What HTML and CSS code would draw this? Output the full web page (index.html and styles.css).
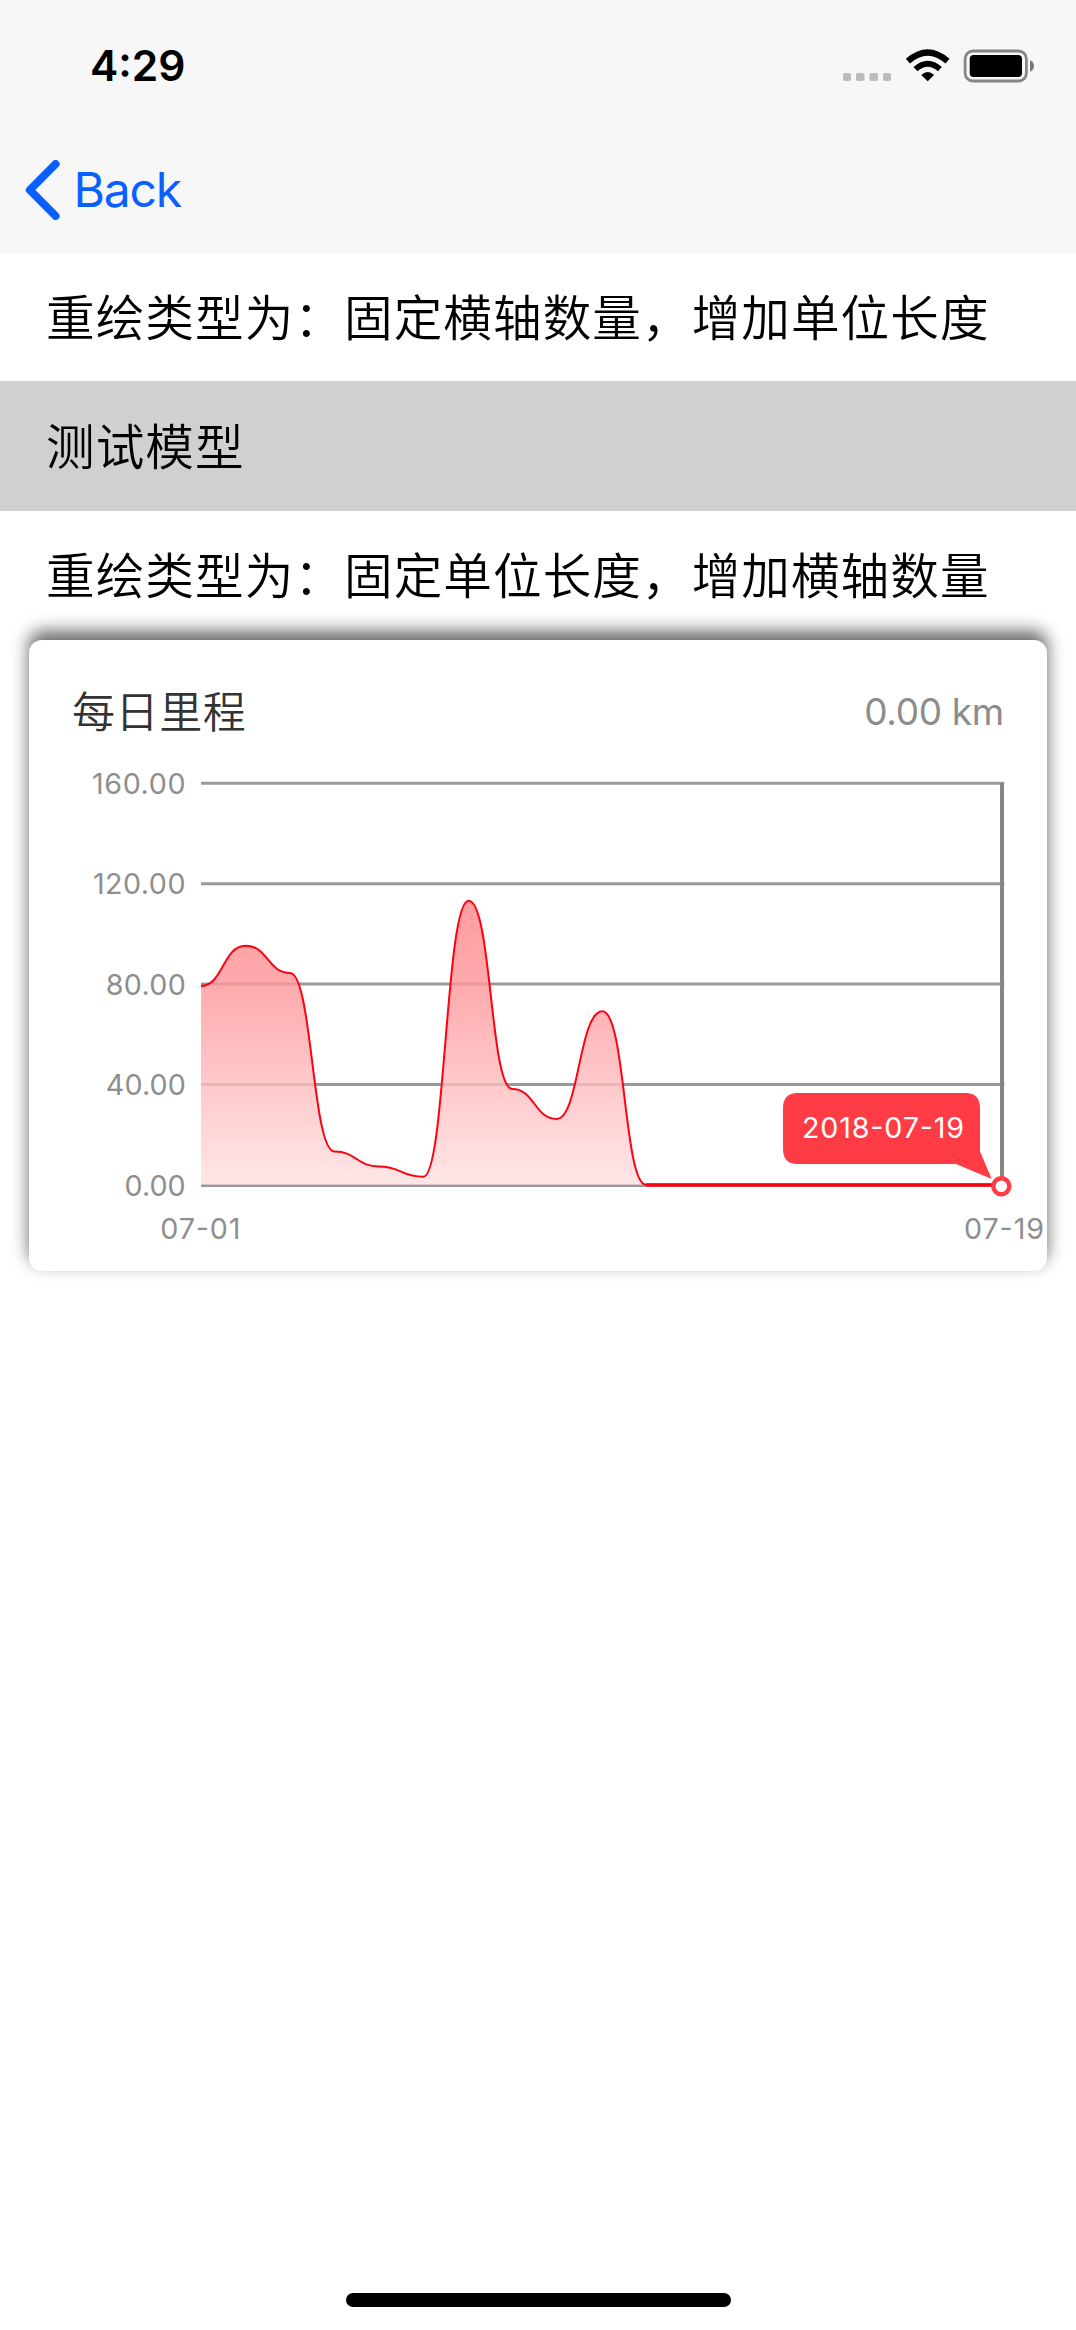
FILE: index.html
```html
<!DOCTYPE html>
<html lang="zh-CN">
<head>
<meta charset="utf-8">
<title>每日里程</title>
<link rel="stylesheet" href="styles.css">
</head>
<body>
<div class="screen">
  <header class="top">
    <div class="status">
      <span class="time">4:29</span>
      <svg class="status-icons" width="194" height="40" viewBox="840 46 194 40" aria-hidden="true">
        <g fill="#bcbcbc">
          <rect x="843" y="73" width="8" height="8" rx="1.8"/>
          <rect x="856" y="73" width="8.5" height="8" rx="1.8"/>
          <rect x="869.5" y="73" width="8.5" height="8" rx="1.8"/>
          <rect x="883" y="73" width="8" height="8" rx="1.8"/>
        </g>
        <path d="M927.7 81.3 L921.3 75 Q927.7 68.9 934.1 75 Z"/>
        <g fill="none" stroke="#000">
          <path d="M915.5 69.2 Q927.7 58.2 939.9 69.2" stroke-width="5.8"/>
          <path d="M907.9 61.2 Q927.7 43.9 947.5 61.2" stroke-width="6.2"/>
        </g>
        <rect x="965.1" y="51" width="61.3" height="30" rx="8" fill="none" stroke="#868686" stroke-width="2.8"/>
        <rect x="969.7" y="55" width="52.3" height="22" rx="4"/>
        <path d="M1030 60.2 Q1034 62 1034 66 Q1034 70 1030 71.8 Z" fill="#777"/>
      </svg>
    </div>
    <nav class="nav">
      <svg width="35" height="60" viewBox="25.6 160 35 60" aria-hidden="true">
        <path d="M56.2 164 L30.4 190 L56.2 216" fill="none" stroke="#0a60ff" stroke-width="8" stroke-linecap="round" stroke-linejoin="round"/>
      </svg>
      <span class="back">Back</span>
    </nav>
  </header>
  <main>
    <div class="row row-first">重绘类型为：固定横轴数量，增加单位长度</div>
    <div class="row row-selected">测试模型</div>
    <div class="row">重绘类型为：固定单位长度，增加横轴数量</div>
    <section class="card">
      <div class="card-head">
        <span class="card-title">每日里程</span>
        <span class="card-value">0.00 km</span>
      </div>
      <svg class="chart" width="1018" height="511" viewBox="29 760 1018 511">
        <defs>
          <linearGradient id="area" gradientUnits="userSpaceOnUse" x1="0" y1="900" x2="0" y2="1186">
            <stop offset="0" stop-color="#ff8387"/>
            <stop offset=".3" stop-color="#ff969a"/>
            <stop offset=".65" stop-color="#ffbcbe"/>
            <stop offset="1" stop-color="#ffe0e2"/>
          </linearGradient>
        </defs>
        <g stroke="#999" stroke-width="3">
          <path d="M201 783.2H1004.3M201 883.7H1004.3M201 984.1H1004.3M201 1084.6H1004.3M201 1185.6H1002"/>
        </g>
        <path fill="url(#area)" fill-opacity=".8" d="M201 986C223 986 223 945.7 245.5 945.7S267.7 973 290 973S312.2 1151.5 334.4 1151.5S356.6 1166.5 378.9 1166.5S401.1 1176.7 423.3 1176.7S445.6 900.7 468.6 900.7S490 1089 512.3 1089S534.5 1119 556.7 1119S579 1011.3 602.3 1011.3S623.8 1184.8 646 1184.8H201Z"/>
        <path fill="none" stroke="#ff0010" stroke-width="2" d="M201 986C223 986 223 945.7 245.5 945.7S267.7 973 290 973S312.2 1151.5 334.4 1151.5S356.6 1166.5 378.9 1166.5S401.1 1176.7 423.3 1176.7S445.6 900.7 468.6 900.7S490 1089 512.3 1089S534.5 1119 556.7 1119S579 1011.3 602.3 1011.3S623.8 1184.8 646 1184.8"/>
        <path d="M646 1185H992" stroke="#e0303a" stroke-width="3.8"/>
        <path d="M646 1185H992" stroke="#ff0010" stroke-width="2"/>
        <path d="M1002 783V1178" stroke="#858585" stroke-width="4"/>
        <g class="tick">
          <text x="92" y="793.8" textLength="93.5">160.00</text>
          <text x="93" y="894.3" textLength="92.5">120.00</text>
          <text x="105.8" y="994.8" textLength="80">80.00</text>
          <text x="105.8" y="1095" textLength="80">40.00</text>
          <text x="124.6" y="1195.7" textLength="61">0.00</text>
          <text x="160.3" y="1239" textLength="80">07-01</text>
          <text x="964" y="1239" textLength="80">07-19</text>
        </g>
        <path fill="#ff3c45" d="M796 1093H967Q980 1094 980 1108V1151.5L991.7 1179L956 1164H796Q783 1163 783 1149V1108Q783 1094 796 1093Z"/>
        <text class="tip" x="802" y="1138.2" textLength="162">2018-07-19</text>
        <circle cx="1001.3" cy="1186.3" r="8" fill="#fff" stroke="#ff3c45" stroke-width="4.4"/>
      </svg>
    </section>
  </main>
  <footer class="home"><div class="home-bar"></div></footer>
</div>
</body>
</html>
```
FILE: styles.css
```css
* { box-sizing: border-box; }
body {
  margin: 0;
  background: #fff;
  color: #000;
  font-family: Inter, "Noto Sans CJK SC", sans-serif;
}
.screen {
  width: 1076px;
  height: 2330px;
  display: flex;
  flex-direction: column;
  overflow: hidden;
}
.top {
  height: 253px;
  background: #f7f7f7;
}
.status {
  height: 132px;
  padding: 0 42px 0 90px;
  display: flex;
  align-items: center;
  justify-content: space-between;
}
.time {
  font-size: 42.5px;
  font-weight: 600;
  line-height: 52px;
}
.nav {
  height: 121px;
  padding: 0 0 5px 25px;
  display: flex;
  align-items: center;
  gap: 13.5px;
}
.back {
  color: #0a60ff;
  font-size: 48px;
  font-weight: 390;
  letter-spacing: -1.2px;
  line-height: 60px;
}
main { flex: 1; }
.row {
  height: 129px;
  padding: 0 0 5px 46px;
  display: flex;
  align-items: center;
  font-family: "Noto Sans CJK SC", sans-serif;
  font-size: 48.6px;
  font-weight: 350;
  letter-spacing: 1.07px;
  white-space: nowrap;
}
.row-first { height: 128px; }
.row-selected {
  height: 130px;
  background: #d0d0d0;
}
.card {
  margin: 0 29px;
  height: 631px;
  background: #fff;
  border-radius: 13px;
  box-shadow: 0 -8.6px 17px rgba(0, 0, 0, .6);
}
.card-head {
  height: 120px;
  padding: 22px 43px 0;
  display: flex;
  align-items: center;
  justify-content: space-between;
}
.card-title {
  padding-bottom: 4px;
  color: #333;
  font-family: "Noto Sans CJK SC", sans-serif;
  font-size: 43px;
  font-weight: 350;
  letter-spacing: .6px;
}
.card-value {
  color: #8c8c8c;
  font-size: 37px;
  font-weight: 400;
  letter-spacing: -.3px;
}
.chart {
  display: block;
  overflow: visible;
}
.tick {
  fill: #8e8e8e;
  font-size: 28.7px;
  font-weight: 400;
}
.tip {
  fill: #fff;
  font-size: 28.7px;
  font-weight: 400;
}
.home {
  height: 44px;
  display: flex;
  justify-content: center;
}
.home-bar {
  width: 385px;
  height: 14px;
  margin-top: 7px;
  border-radius: 7px;
  background: #000;
}
```
